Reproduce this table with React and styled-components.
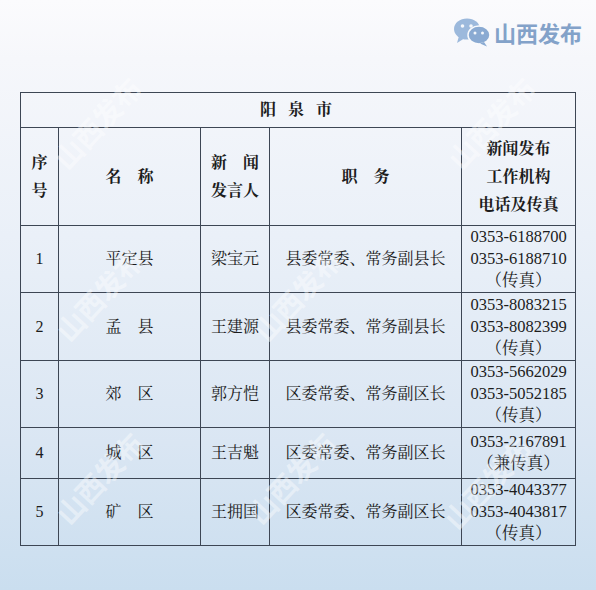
import React from 'react';
import styled, { createGlobalStyle } from 'styled-components';

const GlobalStyle = createGlobalStyle`
  html, body {
    margin: 0;
    padding: 0;
  }
  body {
    font-family: "Liberation Serif", "Noto Serif CJK SC", "Noto Sans CJK SC", serif;
    color: #1c1c1c;
  }
`;

const Page = styled.div`
  position: relative;
  width: 596px;
  height: 590px;
  overflow: hidden;
  background: linear-gradient(180deg, #fbfbfd 0%, #f6f7fb 10%, #eaf0f8 40%, #dae6f3 75%, #cadeef 100%);
`;

const Header = styled.header`
  display: flex;
  justify-content: flex-end;
  align-items: center;
  height: 60px;
  padding: 4px 14px 0 0;
  box-sizing: border-box;
`;

const Logo = styled.div`
  display: flex;
  align-items: center;
  gap: 3px;
`;

const LogoText = styled.span`
  font-family: "Noto Sans CJK SC", sans-serif;
  font-weight: 700;
  font-size: 22px;
  color: #83a2c9;
`;

const Wrap = styled.div`
  padding: 32px 0 0 20px;
`;

const Table = styled.table`
  width: 555px;
  border-collapse: collapse;
  table-layout: fixed;
  position: relative;
  z-index: 1;
`;

const Cell = styled.td`
  border: 1px solid #3d4654;
  text-align: center;
  vertical-align: middle;
  padding: 0;
  height: ${p => p.$h}px;
  font-size: 16px;
  line-height: ${p => p.$lh || 22}px;
  font-weight: ${p => (p.$bold ? 700 : 400)};
  letter-spacing: ${p => p.$spread || 0}px;
  white-space: pre;
`;

const Phone = styled.div`
  font-size: 16.5px;
  line-height: 22px;
`;

const Mark = styled.div`
  position: absolute;
  left: ${p => p.$x}px;
  top: ${p => p.$y}px;
  font-family: "Noto Sans CJK SC", sans-serif;
  font-weight: 700;
  font-size: 28px;
  color: rgba(255, 255, 255, 0.42);
  transform: rotate(-47deg);
  transform-origin: left top;
  white-space: nowrap;
  pointer-events: none;
  z-index: 2;
`;

function BubbleIcon() {
  return (
    <svg width="38" height="30" viewBox="0 0 38 30">
      <ellipse cx="14" cy="12" rx="13" ry="10.5" fill="#9cb9dc" />
      <path d="M6 19 L4 26 L12 21 Z" fill="#9cb9dc" />
      <circle cx="9.5" cy="9" r="1.8" fill="#f4f7fb" />
      <circle cx="18" cy="9" r="1.8" fill="#f4f7fb" />
      <ellipse cx="26" cy="18" rx="11" ry="9" fill="#8aaad2" stroke="#f9fafc" strokeWidth="1.5" />
      <path d="M31 25 L34 29.5 L27 26.5 Z" fill="#8aaad2" />
      <circle cx="22" cy="16" r="1.5" fill="#f4f7fb" />
      <circle cx="29.5" cy="16" r="1.5" fill="#f4f7fb" />
    </svg>
  );
}

const rows = [
  { no: '1', name: '平定县', who: '梁宝元', post: '县委常委、常务副县长', tel: ['0353-6188700', '0353-6188710', '（传真）'], h: 65 },
  { no: '2', name: '孟　县', who: '王建源', post: '县委常委、常务副县长', tel: ['0353-8083215', '0353-8082399', '（传真）'], h: 67 },
  { no: '3', name: '郊　区', who: '郭方恺', post: '区委常委、常务副区长', tel: ['0353-5662029', '0353-5052185', '（传真）'], h: 66 },
  { no: '4', name: '城　区', who: '王吉魁', post: '区委常委、常务副区长', tel: ['0353-2167891', '（兼传真）'], h: 50 },
  { no: '5', name: '矿　区', who: '王拥国', post: '区委常委、常务副区长', tel: ['0353-4043377', '0353-4043817', '（传真）'], h: 66 },
];

const marks = [
  { x: 44, y: 150 },
  { x: 438, y: 150 },
  { x: 46, y: 322 },
  { x: 244, y: 322 },
  { x: 46, y: 505 },
  { x: 238, y: 505 },
  { x: 434, y: 510 },
];

export default function App() {
  return (
    <Page>
      <GlobalStyle />
      <Header>
        <Logo>
          <BubbleIcon />
          <LogoText>山西发布</LogoText>
        </Logo>
      </Header>
      <Wrap>
        <Table>
          <colgroup>
            <col style={{ width: 38 }} />
            <col style={{ width: 142 }} />
            <col style={{ width: 69 }} />
            <col style={{ width: 192 }} />
            <col style={{ width: 114 }} />
          </colgroup>
          <tbody>
            <tr>
              <Cell colSpan={5} $h={34} $bold $spread={4}>阳 泉 市</Cell>
            </tr>
            <tr>
              <Cell $h={97} $bold $lh={28}>{'序\n号'}</Cell>
              <Cell $h={97} $bold>名　称</Cell>
              <Cell $h={97} $bold $lh={28}>{'新　闻\n发言人'}</Cell>
              <Cell $h={97} $bold>职　务</Cell>
              <Cell $h={97} $bold $lh={28}>{'新闻发布\n工作机构\n电话及传真'}</Cell>
            </tr>
            {rows.map(r => (
              <tr key={r.no}>
                <Cell $h={r.h}>{r.no}</Cell>
                <Cell $h={r.h}>{r.name}</Cell>
                <Cell $h={r.h}>{r.who}</Cell>
                <Cell $h={r.h}>{r.post}</Cell>
                <Cell $h={r.h}>
                  {r.tel.map(t => (
                    <Phone key={t}>{t}</Phone>
                  ))}
                </Cell>
              </tr>
            ))}
          </tbody>
        </Table>
      </Wrap>
      {marks.map((m, i) => (
        <Mark key={i} $x={m.x} $y={m.y}>山西发布</Mark>
      ))}
    </Page>
  );
}
